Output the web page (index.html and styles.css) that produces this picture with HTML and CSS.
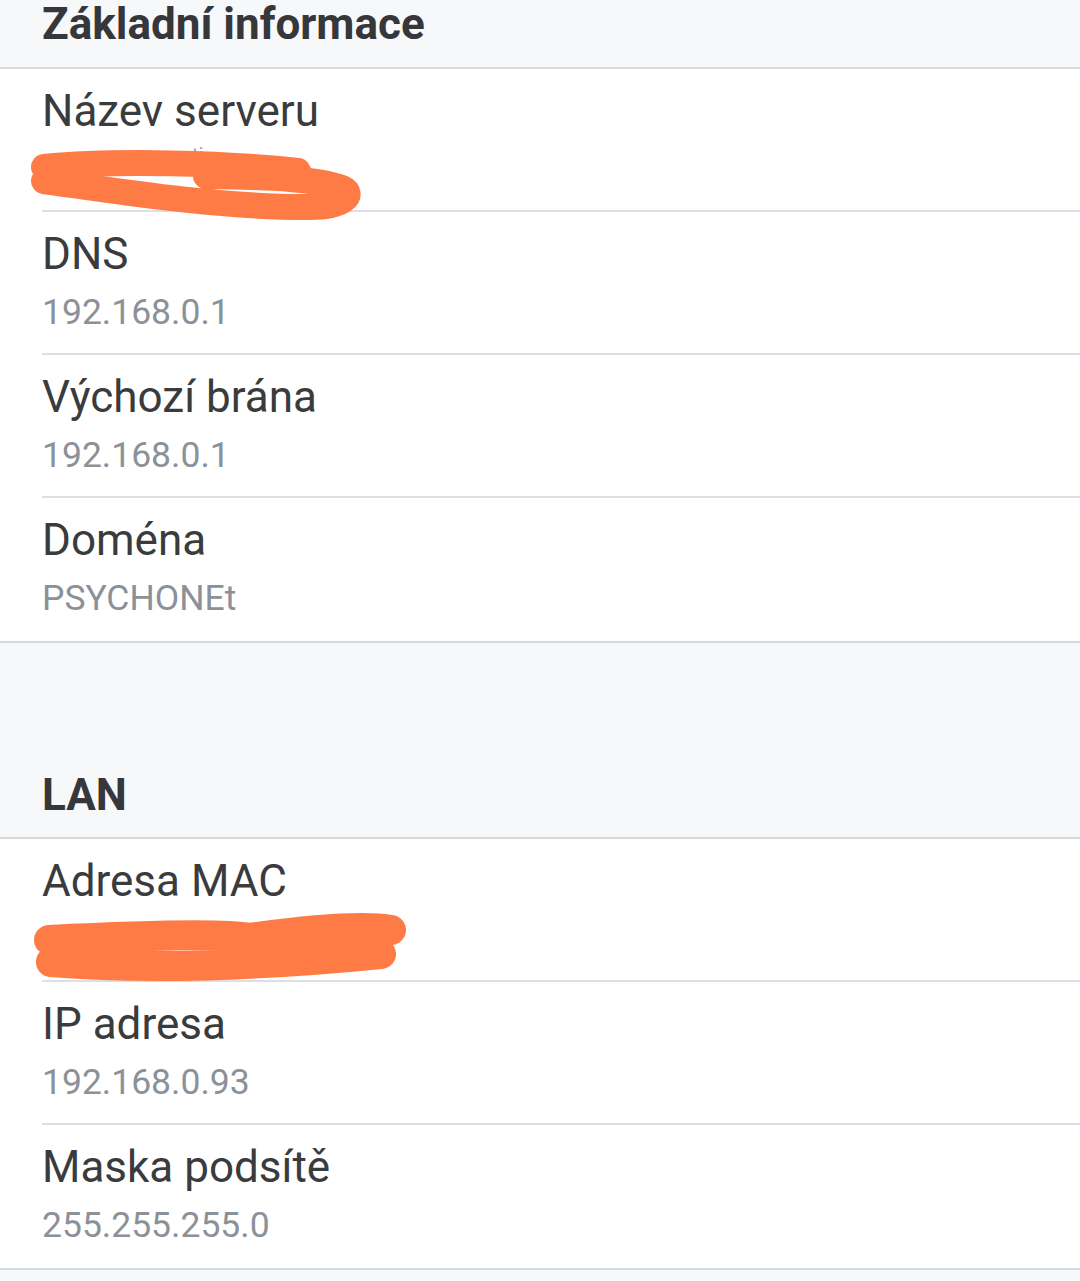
FILE: index.html
```html
<!DOCTYPE html>
<html lang="cs">

<head>
    <meta charset="UTF-8">
    <meta name="viewport" content="width=device-width, initial-scale=1.0">
    <title>Informace o síti</title>
    <link rel="stylesheet" href="styles.css">
</head>

<body>
    <div class="section-head first">Základní informace</div>
    <ul class="info-list">
        <li class="info-row">
            <div class="row-inner">
                <div class="row-title">Název serveru</div>
                <div class="row-value hidden-value">
                    <span class="peek">ti</span>
                    <svg class="scribble" width="380" height="80" viewBox="0 0 380 80">
                        <path d="M18,20 C90,13 200,16 272,24" />
                        <path d="M18,34 C90,44 190,60 280,60 C318,61 330,47 316,41 C290,32 250,30 180,29" />
                    </svg>
                </div>
            </div>
        </li>
        <li class="info-row">
            <div class="row-inner">
                <div class="row-title">DNS</div>
                <div class="row-value">192.168.0.1</div>
            </div>
        </li>
        <li class="info-row">
            <div class="row-inner">
                <div class="row-title">Výchozí brána</div>
                <div class="row-value">192.168.0.1</div>
            </div>
        </li>
        <li class="info-row">
            <div class="row-inner">
                <div class="row-title">Doména</div>
                <div class="row-value">PSYCHONEt</div>
            </div>
        </li>
    </ul>

    <div class="section-head spaced">LAN</div>
    <ul class="info-list">
        <li class="info-row">
            <div class="row-inner">
                <div class="row-title">Adresa MAC</div>
                <div class="row-value hidden-value">
                    <svg class="scribble mac" width="400" height="80" viewBox="0 0 400 80">
                        <path class="thick" d="M10,22 C110,17 190,16 210,20 C260,13 320,6 352,12" />
                        <path class="thick" d="M12,44 C110,52 220,48 342,36" />
                    </svg>
                </div>
            </div>
        </li>
        <li class="info-row">
            <div class="row-inner">
                <div class="row-title">IP adresa</div>
                <div class="row-value">192.168.0.93</div>
            </div>
        </li>
        <li class="info-row">
            <div class="row-inner">
                <div class="row-title">Maska podsítě</div>
                <div class="row-value">255.255.255.0</div>
            </div>
        </li>
    </ul>
    <div class="tail"></div>
</body>

</html>
```

FILE: styles.css
```css
body {
    font-family: Roboto, "Noto Sans", Arial, sans-serif;
    background-color: #f7f8fa;
    color: #3a3b3d;
    margin: 0;
    padding: 0;
    width: 1080px;
    overflow: hidden;
}

.section-head {
    font-size: 44px;
    font-weight: bold;
    line-height: 44px;
    color: #36373a;
    padding: 0 42px 21px;
    border-bottom: 2px solid #d6d9dd;
}

.section-head.first {
    padding-top: 2px;
}

.section-head.spaced {
    padding-top: 130px;
    padding-bottom: 20px;
}

.info-list {
    list-style: none;
    margin: 0;
    padding: 0;
    background-color: #fff;
    border-bottom: 2px solid #d6d9dd;
}

.info-row {
    padding-left: 42px;
}

.row-inner {
    padding: 20px 0 25px;
    border-bottom: 2px solid #dddfe2;
}

.info-row:last-child .row-inner {
    border-bottom: none;
    padding-bottom: 27px;
}

.row-title {
    font-size: 44px;
    line-height: 44px;
    color: #3a3b3d;
}

.row-value {
    margin-top: 20px;
    font-size: 35.5px;
    line-height: 32px;
    height: 32px;
    color: #8b9199;
}

.hidden-value {
    position: relative;
}

.peek {
    position: absolute;
    left: 150px;
    top: -14px;
    font-size: 20px;
    color: #9aa0a6;
}

.scribble {
    position: absolute;
    left: -16px;
    top: -6px;
    overflow: visible;
}

.scribble path {
    fill: none;
    stroke: #ff7b45;
    stroke-width: 26;
    stroke-linecap: round;
    stroke-linejoin: round;
}

.scribble.mac {
    top: -5px;
    left: -3px;
}

.scribble .thick {
    stroke-width: 30;
}

.tail {
    height: 20px;
}
```
